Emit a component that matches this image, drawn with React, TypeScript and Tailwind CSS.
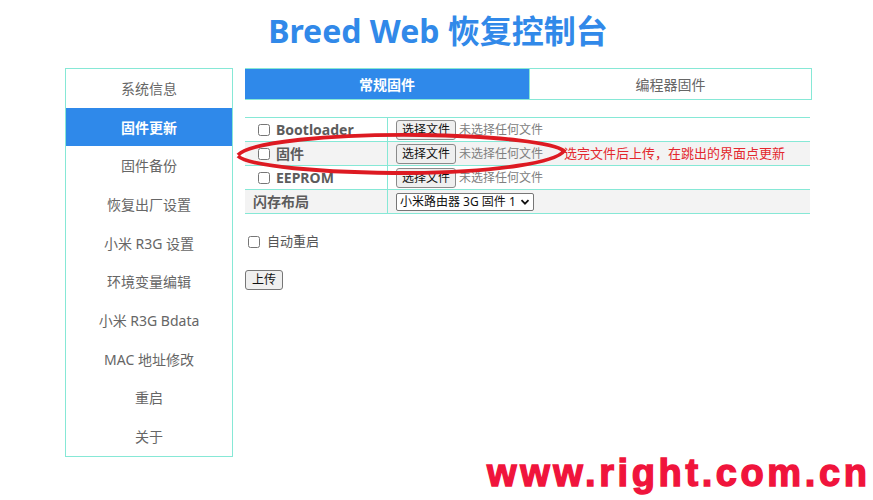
import React from "react";

const menu = [
  "系统信息",
  "固件更新",
  "固件备份",
  "恢复出厂设置",
  "小米 R3G 设置",
  "环境变量编辑",
  "小米 R3G Bdata",
  "MAC 地址修改",
  "重启",
  "关于",
];

function FileBtn() {
  return (
    <div className="flex items-center">
      <button className="h-[20px] px-[5px] bg-[#efefef] border border-[#8a8a8a] rounded-[3px] text-[12px] leading-[18px] text-[#111]">
        选择文件
      </button>
      <span className="ml-[3px] text-[12px] text-[#808080]">未选择任何文件</span>
    </div>
  );
}

function Check() {
  return <input type="checkbox" className="m-0 w-[12px] h-[12px] shrink-0" />;
}

export default function App() {
  return (
    <div
      className="relative w-[873px] h-[500px] bg-white overflow-hidden"
      style={{ fontFamily: '"Noto Sans", "Noto Sans CJK SC", sans-serif' }}
    >
      <div className="pt-[11px] h-[51px] text-center text-[32px] leading-[40px] font-bold text-[#3189e9] pl-[3px]">
        Breed Web 恢复控制台
      </div>

      <div className="flex pl-[65px] gap-[12px] mt-[17px]">
        <div className="w-[168px] border border-[#86e8d6] flex flex-col">
          {menu.map((m, i) => (
            <div
              key={m}
              className={
                i === 1
                  ? "h-[38.7px] flex items-center justify-center bg-[#2f89ea] text-white font-bold text-[14px]"
                  : "h-[38.7px] flex items-center justify-center text-[#666] text-[14px]"
              }
            >
              {m}
            </div>
          ))}
        </div>

        <div className="w-[567px] flex flex-col">
          <div className="flex h-[32px] border-t border-b border-[#86e8d6]">
            <div className="w-[284px] bg-[#2f89ea] text-white font-bold text-[14px] flex items-center justify-center">
              常规固件
            </div>
            <div className="flex-1 border-l border-r border-[#86e8d6] text-[#666] text-[14px] flex items-center justify-center">
              编程器固件
            </div>
          </div>

          <div className="mt-[17px] w-[565px] border-b border-[#86e8d6] text-[#5c5c5c]">
            <div className="flex h-[24px] border-t border-[#86e8d6] bg-white">
              <div className="w-[143px] border-r border-[#86e8d6] flex items-center pl-[13px] gap-[6px]">
                <Check />
                <span className="font-bold text-[14px]">Bootloader</span>
              </div>
              <div className="flex-1 flex items-center pl-[8px]">
                <FileBtn />
              </div>
            </div>
            <div className="flex h-[24px] border-t border-[#86e8d6] bg-[#f3f3f3]">
              <div className="w-[143px] border-r border-[#86e8d6] flex items-center pl-[13px] gap-[6px]">
                <Check />
                <span className="font-bold text-[14px]">固件</span>
              </div>
              <div className="flex-1 flex items-center pl-[8px]">
                <FileBtn />
                <span className="ml-[21px] text-[13px] text-[#e3282e]">
                  选完文件后上传，在跳出的界面点更新
                </span>
              </div>
            </div>
            <div className="flex h-[24px] border-t border-[#86e8d6] bg-white">
              <div className="w-[143px] border-r border-[#86e8d6] flex items-center pl-[13px] gap-[6px]">
                <Check />
                <span className="font-bold text-[14px]">EEPROM</span>
              </div>
              <div className="flex-1 flex items-center pl-[8px]">
                <FileBtn />
              </div>
            </div>
            <div className="flex h-[24px] border-t border-[#86e8d6] bg-[#f3f3f3]">
              <div className="w-[143px] border-r border-[#86e8d6] flex items-center pl-[8px]">
                <span className="font-bold text-[14px]">闪存布局</span>
              </div>
              <div className="flex-1 flex items-center pl-[8px]">
                <div className="h-[18px] flex items-center gap-[4px] pl-[3px] pr-[3px] bg-white border border-[#767676] rounded-[2px] text-[12px] text-[#111]">
                  <span>小米路由器 3G 固件 1</span>
                  <svg width="10" height="10" viewBox="0 0 10 10">
                    <path d="M1.5 3.2 L5 6.7 L8.5 3.2" fill="none" stroke="#111" strokeWidth="1.8" />
                  </svg>
                </div>
              </div>
            </div>
          </div>

          <div className="mt-[18px] flex items-center gap-[7px] pl-[3px]">
            <Check />
            <span className="text-[13px] text-[#555]">自动重启</span>
          </div>

          <div className="mt-[14px]">
            <button className="h-[20px] px-[6px] bg-[#efefef] border border-[#767676] rounded-[3px] text-[12px] leading-[18px] text-[#111]">
              上传
            </button>
          </div>
        </div>
      </div>

      <svg
        className="absolute left-0 top-0 pointer-events-none"
        width="873"
        height="500"
        viewBox="0 0 873 500"
      >
        <path
          d="M238 155 C 250 142, 330 134, 420 135 C 500 136, 555 143, 564 151 C 556 162, 500 172, 410 173 C 320 173, 248 166, 238 156"
          fill="none"
          stroke="#dd1a22"
          strokeWidth="3.8"
        />
      </svg>

      <div
        className="absolute left-[487px] top-[454px] text-[38px] leading-[38px] font-black tracking-[3.6px] text-[#f0143c] [-webkit-text-stroke:1.4px_#f0143c]"
        style={{ fontFamily: '"Liberation Sans", Arial, sans-serif' }}
      >
        www.right.com.cn
      </div>
    </div>
  );
}
